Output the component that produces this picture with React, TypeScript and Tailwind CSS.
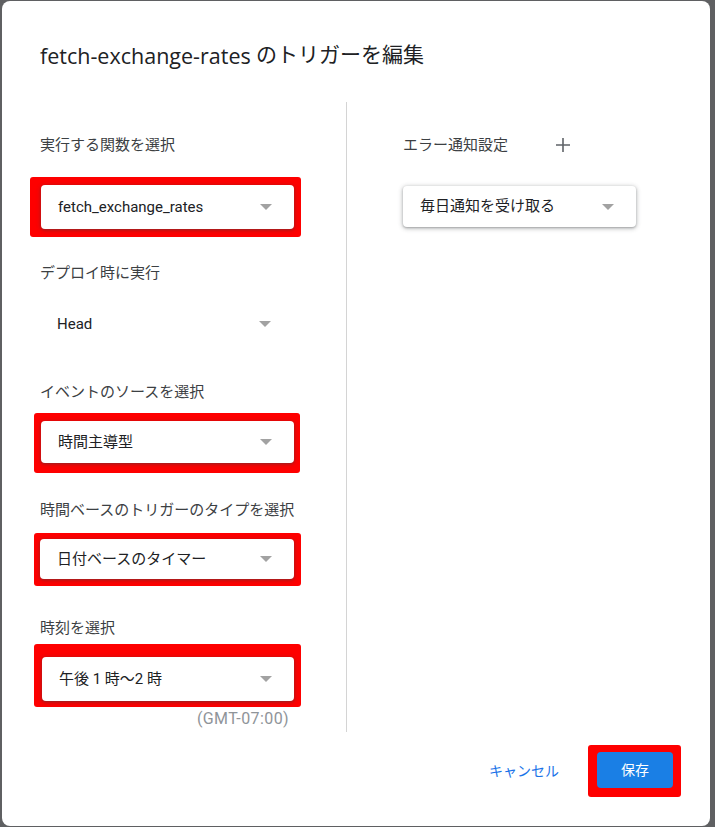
import type { ReactNode } from 'react'

const font = { fontFamily: 'Roboto, "Noto Sans CJK JP", sans-serif' }

function Caret() {
  return (
    <svg width="12" height="6" viewBox="0 0 12 6" className="shrink-0">
      <path d="M0 0h12L6 6z" fill="#a2a2a2" />
    </svg>
  )
}

function Select({ value, flat, cls }: { value: string; flat?: boolean; cls: string }) {
  return (
    <div
      className={`flex items-center justify-between bg-white rounded pl-[17px] pr-[22px] text-[15px] text-[#202124] ${
        flat ? '' : 'shadow-[0_1px_4px_1px_rgba(60,64,67,0.28),0_1px_2px_rgba(60,64,67,0.3)]'
      } ${cls}`}
    >
      <span>{value}</span>
      <Caret />
    </div>
  )
}

function RedFrame({ cls, children }: { cls: string; children: ReactNode }) {
  return <div className={`bg-[#fe0000] rounded-[3px] ${cls}`}>{children}</div>
}

function Label({ text, cls }: { text: string; cls: string }) {
  return <p className={`text-[15px] leading-5 text-[#3c4043] ${cls}`}>{text}</p>
}

export default function App() {
  return (
    <div className="w-[715px] h-[827px] bg-[#5f6062] pt-px pl-[2px]" style={font}>
      <div className="w-[708px] h-[825px] bg-white rounded-[8px] flex flex-col">
        <h1 className="pl-[38px] mt-[41px] h-[28px] flex items-center text-[21px] text-[#202124] whitespace-pre">
          <span className="text-[21.5px]" style={{ fontFamily: '"Open Sans", "Noto Sans CJK JP", sans-serif' }}>
            fetch-exchange-rates
          </span>
          <span> のトリガーを編集</span>
        </h1>

        <div className="flex mt-[32px]">
          {/* left column */}
          <div className="w-[345px] h-[630px] border-r border-[#d4d4d4] pl-[38px]">
            <Label text="実行する関数を選択" cls="mt-[33px]" />
            <RedFrame cls="mt-[22px] -ml-[10px] w-[271px] pl-[11px] pt-[8px] pb-[8px]">
              <Select value="fetch_exchange_rates" cls="w-[253px] h-[44px]" />
            </RedFrame>

            <Label text="デプロイ時に実行" cls="mt-[26px]" />
            <Select value="Head" flat cls="mt-[19px] w-[253px] h-[44px]" />

            <Label text="イベントのソースを選択" cls="mt-[36px]" />
            <RedFrame cls="mt-[11px] -ml-[6px] w-[266px] pl-[7px] pt-[8px] pb-[10px]">
              <Select value="時間主導型" cls="w-[253px] h-[42px]" />
            </RedFrame>

            <Label text="時間ベースのトリガーのタイプを選択" cls="mt-[27px]" />
            <RedFrame cls="mt-[13px] -ml-[6px] w-[267px] pl-[6px] pt-[6px] pb-[7px]">
              <Select value="日付ベースのタイマー" cls="w-[254px] h-[40px]" />
            </RedFrame>

            <Label text="時刻を選択" cls="mt-[32px]" />
            <RedFrame cls="mt-[6px] -ml-[6px] w-[267px] pl-[8px] pt-[13px] pb-[6px]">
              <Select value="午後 1 時〜2 時" cls="w-[252px] h-[44px]" />
            </RedFrame>
            <p className="w-[249px] text-right text-[16px] tracking-[0.4px] leading-[18px] text-[#8f9499] mt-[3px]">
              (GMT-07:00)
            </p>
          </div>

          {/* right column */}
          <div className="pl-[56px]">
            <div className="flex items-center mt-[33px] h-5">
              <span className="text-[15px] leading-5 text-[#3c4043]">エラー通知設定</span>
              <svg width="14" height="14" viewBox="0 0 14 14" className="ml-[48px]">
                <path d="M7 0v14M0 7h14" stroke="#5f6368" strokeWidth="1.6" />
              </svg>
            </div>
            <Select value="毎日通知を受け取る" cls="mt-[31px] w-[233px] h-[41px]" />
          </div>
        </div>

        {/* footer */}
        <div className="flex items-center justify-end mt-[13px] pr-[29px]">
          <span className="text-[14px] text-[#1a73e8] mr-[29px]">キャンセル</span>
          <RedFrame cls="px-[9px] pt-[7px] pb-[9px] w-[93px]">
            <button className="w-[76px] h-[36px] rounded bg-[#1a7fe5] text-white text-[14px]">保存</button>
          </RedFrame>
        </div>
      </div>
    </div>
  )
}
